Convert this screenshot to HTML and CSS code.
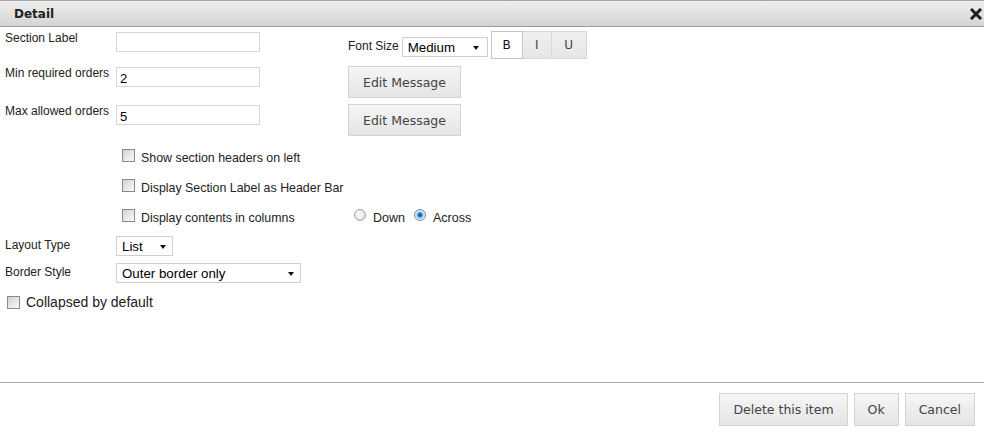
FILE: index.html
```html
<!DOCTYPE html>
<html lang="en">
<head>
    <meta charset="UTF-8">
    <title>Detail</title>
    <link rel="stylesheet" href="styles.css">
</head>
<body>
    <div class="dialog">
        <div class="titlebar">
            <span class="title">Detail</span>
            <svg class="close" width="12" height="12" viewBox="0 0 12 12">
                <path d="M2 2 L10 10 M10 2 L2 10" stroke="#1e1e1e" stroke-width="3" stroke-linecap="square"/>
            </svg>
        </div>

        <div class="content">
            <div class="top-grid">
                <label class="field-label">Section Label</label>
                <div><input class="text-input" type="text" value=""></div>
                <div class="font-tools">
                    <span class="font-label">Font Size</span>
                    <div class="select select-font"><span>Medium</span><span class="arrow"></span></div>
                    <div class="fmt-group">
                        <span class="fmt fmt-b active">B</span>
                        <span class="fmt fmt-i">I</span>
                        <span class="fmt fmt-u">U</span>
                    </div>
                </div>

                <label class="field-label">Min required orders</label>
                <div><input class="text-input" type="text" value="2"></div>
                <div><button type="button" class="btn">Edit Message</button></div>

                <label class="field-label">Max allowed orders</label>
                <div><input class="text-input" type="text" value="5"></div>
                <div><button type="button" class="btn">Edit Message</button></div>
            </div>

            <div class="options">
                <div class="check-row">
                    <label class="check"><input type="checkbox"> Show section headers on left</label>
                </div>
                <div class="check-row">
                    <label class="check"><input type="checkbox"> Display Section Label as Header Bar</label>
                </div>
                <div class="check-row">
                    <label class="check"><input type="checkbox"> Display contents in columns</label>
                    <label class="radio"><input type="radio" name="flow"> Down</label>
                    <label class="radio"><input type="radio" name="flow" checked> Across</label>
                </div>
            </div>

            <div class="select-row layout-row">
                <span class="field-label">Layout Type</span>
                <div class="select select-list"><span>List</span><span class="arrow"></span></div>
            </div>
            <div class="select-row border-row">
                <span class="field-label">Border Style</span>
                <div class="select select-border"><span>Outer border only</span><span class="arrow"></span></div>
            </div>

            <div class="collapsed-row">
                <label class="check"><input type="checkbox"> Collapsed by default</label>
            </div>
        </div>

        <div class="footer">
            <button type="button" class="btn btn-footer">Delete this item</button>
            <button type="button" class="btn btn-footer">Ok</button>
            <button type="button" class="btn btn-footer">Cancel</button>
        </div>
    </div>
</body>
</html>
```

FILE: styles.css
```css
body {
    margin: 0;
    padding: 0;
    font-family: "Liberation Sans", Arial, sans-serif;
    font-size: 12px;
    color: #222;
    background-color: #fff;
}
.dialog {
    height: 432px;
    display: flex;
    flex-direction: column;
}
.titlebar {
    height: 27px;
    box-sizing: border-box;
    border-top: 1px solid #a9a9a9;
    border-bottom: 1px solid #9b9b9b;
    background: linear-gradient(#efefef, #d4d4d4);
    display: flex;
    align-items: center;
    justify-content: space-between;
    padding: 1px 2px 0 14px;
}
.title {
    font-family: "DejaVu Sans", Verdana, sans-serif;
    font-weight: bold;
    font-size: 12px;
    color: #222;
}
.content {
    flex: 1;
    padding: 4px 0 0 5px;
}
.top-grid {
    display: grid;
    grid-template-columns: 111px 232px auto;
    grid-template-rows: 29px 32px 32px;
    row-gap: 6px;
}
.field-label {
    line-height: 14px;
    color: #222;
}
.text-input {
    width: 144px;
    height: 20px;
    box-sizing: border-box;
    margin: 1px 0 0 0;
    border: 1px solid #d6d6d6;
    padding: 2px 3px 0;
    font-family: "Liberation Sans", Arial, sans-serif;
    font-size: 13px;
    color: #000;
    outline: none;
}
.font-tools {
    display: flex;
    align-items: flex-start;
}
.font-label {
    margin-top: 8px;
    margin-right: 3px;
    line-height: 14px;
}
.select {
    display: flex;
    align-items: center;
    justify-content: space-between;
    height: 20px;
    box-sizing: border-box;
    border: 1px solid #cfcfcf;
    background: #fff;
    padding: 1px 6px 0 5px;
    font-size: 13.3px;
    color: #000;
}
.arrow {
    width: 0;
    height: 0;
    border-left: 3.5px solid transparent;
    border-right: 3.5px solid transparent;
    border-top: 4px solid #111;
}
.select-font {
    width: 86px;
    margin-top: 6px;
    padding-right: 8px;
}
.fmt-group {
    display: flex;
    margin-left: 3px;
}
.fmt {
    height: 28px;
    box-sizing: border-box;
    display: flex;
    align-items: center;
    justify-content: center;
    border: 1px solid #d8d8d8;
    border-left: none;
    background: linear-gradient(#f0f0f0, #e6e6e6);
    font-family: "DejaVu Sans", Verdana, sans-serif;
    font-size: 12px;
    color: #444;
}
.fmt.active {
    border: 1px solid #c4c4c4;
    background: #fff;
    color: #111;
}
.fmt-b { width: 32px; }
.fmt-i { width: 29px; }
.fmt-u { width: 35px; }
.btn {
    height: 32px;
    padding: 0 14px;
    border: 1px solid #d3d3d3;
    background: linear-gradient(#f6f6f6, #e4e4e4);
    font-family: "DejaVu Sans", Verdana, sans-serif;
    font-size: 12.5px;
    color: #444;
    cursor: pointer;
}
.options {
    margin-top: 7px;
    padding-left: 117px;
}
.check-row {
    height: 30px;
    display: flex;
    align-items: center;
}
.check {
    display: flex;
    align-items: center;
    width: 232px;
    line-height: 14px;
    font-size: 12.4px;
}
.check input {
    appearance: none;
    width: 13px;
    height: 13px;
    margin: 0 6px 6px 0;
    border: 1px solid #8a8a8a;
    background: linear-gradient(135deg, #d2d2d2, #fbfbfb);
}
.radio {
    display: flex;
    align-items: center;
    margin-right: 9px;
    font-size: 12.5px;
    line-height: 14px;
}
.radio input {
    appearance: none;
    width: 12px;
    height: 12px;
    margin: 0 7px 6px 0;
    border: 1px solid #a2a2a2;
    border-radius: 50%;
    background: radial-gradient(circle at 40% 40%, #fff, #d6d6d6);
}
.radio input:checked {
    border-color: #6d8fae;
    background: radial-gradient(circle, #0b4a86 0, #2a7fc6 2px, #9fcdf0 3px, #e6e6e6 4.5px);
}
.select-row {
    display: flex;
    height: 20px;
}
.select-row .field-label {
    width: 111px;
    padding-top: 2px;
}
.layout-row {
    margin-top: 3px;
}
.border-row {
    margin-top: 7px;
}
.select-list {
    width: 57px;
}
.select-border {
    width: 185px;
}
.collapsed-row {
    margin-top: 11px;
    height: 16px;
    display: flex;
    align-items: center;
    padding-left: 2px;
}
.collapsed-row .check {
    font-size: 14px;
    line-height: 16px;
}
.collapsed-row .check input {
    margin: 0 6px 0 0;
}
.footer {
    border-top: 1px solid #a9a9a9;
    padding: 10px 9px 6px;
    display: flex;
    justify-content: flex-end;
    gap: 6px;
}
.btn-footer {
    height: 33px;
    padding: 0 13px;
}
```
